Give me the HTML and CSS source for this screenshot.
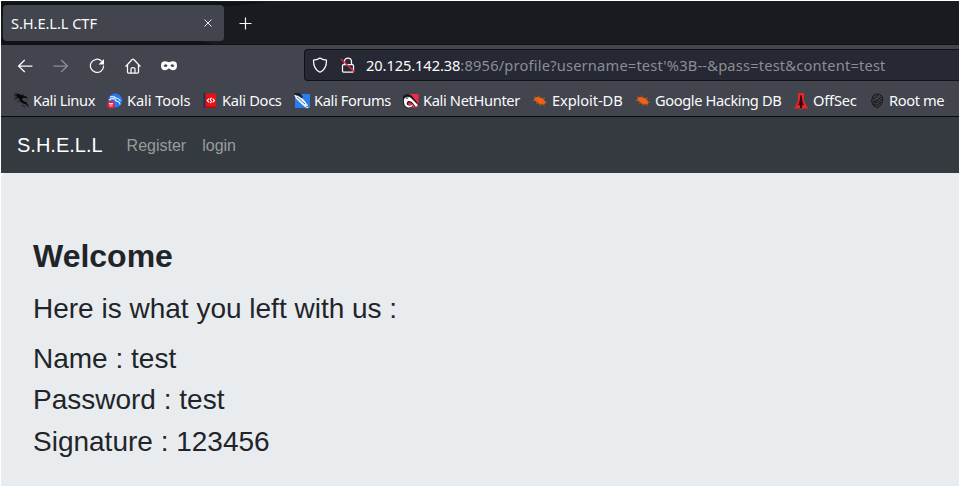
FILE: index.html
```html
<!DOCTYPE html>
<html lang="en">
<head>
<meta charset="utf-8">
<title>S.H.E.L.L CTF</title>
<link rel="stylesheet" href="styles.css">
</head>
<body>
<div class="window">
  <header class="chrome">
    <div class="tabs">
      <svg class="wallpaper" width="958" height="43" viewBox="1 1 958 43"><path d="M1 1h280L230 6H60L1 17zM1 39h60l10 5H1zM64 40h130l20 4H60z" fill="#101315"/><path d="M1 1h290v1H1z" fill="#15211f"/></svg>
      <div class="tab"><span>S.H.E.L.L CTF</span>
        <svg class="close" width="8" height="8" viewBox="0 0 8 8"><path d="M.5.5l7 7M7.5.5l-7 7" stroke="#e8e8ec" fill="none"/></svg>
      </div>
      <svg class="plus" width="13" height="13" viewBox="0 0 13 13"><path d="M6.500.5v12M.5 6.500h12" stroke="#fbfbfe" stroke-width="1.200" fill="none"/></svg>
    </div>
    <div class="toolbar">
      <div class="buttons">
        <svg width="16" height="16" viewBox="0 0 16 16"><path d="M15 8H1.500M7.500 2.300L1.600 8l5.900 5.700" class="stroke"/></svg>
        <svg class="disabled" width="16" height="16" viewBox="0 0 16 16"><path d="M1 8h13.500M8.500 2.300L14.400 8l-5.900 5.700" class="stroke"/></svg>
        <svg width="16" height="16" viewBox="0 0 16 16"><path d="M12.600 3.100A6.600 6.600 0 1 0 14.600 8" class="stroke"/><path d="M15 1v5.500H9.500z" fill="#fbfbfe"/></svg>
        <svg width="16" height="16" viewBox="0 0 16 16"><path d="M.9 8.200L7.200 1.500q.8-.7 1.600 0l6.300 6.700M2.500 6.800V14q0 1 1 1h9q1 0 1-1V6.800M6 15v-4.200Q6 9.500 8 9.500t2 1.300V15" class="stroke"/></svg>
        <svg width="16" height="16" viewBox="0 0 16 16"><path fill-rule="evenodd" d="M0 7.500Q0 3.300 4 3.300C6 3.300 7 4.200 8 4.200s2-.9 4-.9q4 0 4 4.200 0 4.800-4 4.800C10 12.300 9 10.500 8 10.500s-2 1.800-4 1.800q-4 0-4-4.800zM2.600 7.800q1.900 2.600 4-.1-2.100-2.900-4 .1zM9.400 7.700q2.100 2.700 4 .1-1.900-3-4-.1z" fill="#fbfbfe"/></svg>
      </div>
      <div class="address">
        <svg width="16" height="16" viewBox="0 0 16 16"><path d="M8 .9Q10 2.600 14.500 3.200C14.600 9.200 13 13 8 15.200 3 13 1.400 9.200 1.500 3.200Q6 2.600 8 .9z" class="stroke"/></svg>
        <svg class="lock" width="16" height="16" viewBox="0 0 16 16"><path d="M4.500 7V4.500a3.500 3.500 0 0 1 7 0V7M3.500 7.500h9q1 0 1 1V14q0 1-1 1h-9q-1 0-1-1V8.500q0-1 1-1z" class="stroke"/><path d="M1 2l13.500 13" stroke="#f0224d" stroke-width="1.500"/></svg>
        <span class="url"><b>20.125.142.38</b>:8956/profile?username=test'%3B--&amp;pass=test&amp;content=test</span>
      </div>
    </div>
    <nav class="bookmarks">
      <a><svg width="16" height="16" viewBox="0 0 16 16"><path d="M0 .5C3 .3 6 .7 8 2l3-.5-1 1.300q4 0 5 3-3-1.500-5-.8-2 1.500.5 3 4 1 5.300 6.500-2-3.500-6-4.300Q5.500 8.500 6.500 5.500 4.500 4 1 4l4-.7L0 2l5 .1z" fill="#08090a"/><path d="M1 6.500q2-1.500 5-1.500M6 8l-2 1M12 10l2-1M9 12l3 2" stroke="#111315" stroke-width=".8" fill="none"/></svg><span class="linux">Kali Linux</span></a>
      <a><svg width="16" height="16" viewBox="0 0 16 16"><circle cx="8.300" cy="7.500" r="7" fill="#2777f5"/><path d="M3 4q3-1 6 1 3 .2 4.500 3M2 7q3-2 6-1 0 2 3 2.500 2 1 2 3" stroke="#e9f2ff" stroke-width="1.100" fill="none"/><circle cx="4" cy="11.700" r="3.800" fill="#ed1f35"/><path d="M1.900 10.500h4.200M3.200 10.500v3M4.900 10.500v3" stroke="#fff" stroke-width=".8" fill="none"/></svg><span class="tools">Kali Tools</span></a>
      <a><svg width="16" height="16" viewBox="0 0 16 16"><path d="M1.500 0H4v15H1.500z" fill="#202c58"/><path d="M3.500.5H14v14H3.500z" fill="#e81215"/><path d="M2.500 13.500H14V15H2.500z" fill="#a80d12"/><path d="M7 5.700L5.200 7.500 7 9.300M10.700 5.700l1.800 1.800-1.800 1.800M10 5Q7.200 5.500 8.800 7.300T7.800 10" stroke="#fff" stroke-width="1.100" fill="none"/></svg><span class="docs">Kali Docs</span></a>
      <a><svg width="16" height="16" viewBox="0 0 16 16"><path d="M1 1h15v14H1z" fill="#287eed"/><path d="M0 0h6l3 4-3 2-6-4z" fill="#17202b"/><path d="M0 1.500L5 3l5 4 5 7-2 1.500-5-4-6-6z" fill="#f4f7fa"/><path d="M3 4l8 7M0 1l5 2 3 2M12 14l3-1" stroke="#243040" stroke-width=".7" fill="none"/></svg><span class="forums">Kali Forums</span></a>
      <a><svg width="16" height="16" viewBox="0 0 16 16"><path d="M3 1h12.500v13.500H4z" fill="#f32b42"/><path d="M0 3q5-4 9 0l7 9-3 2.500-4-4Q5 8 5 11q1 3 5 1-1 4-6 3-4-1-4-6z" fill="#15191c"/><path d="M1 6q3-4 7-1l7 7-2 2-4-5Q5 7 4 9.500t2 3q2 .5 4-1-1 3.500-5 3Q0 13 1 6z" fill="#fff"/><path d="M2 4.500h4L4 6z" fill="#30363b"/></svg><span class="nethunter">Kali NetHunter</span></a>
      <a><svg width="16" height="16" viewBox="0 0 16 16"><path d="M2 6q2-3 6-1.500 3 .5 5 3.500 1 3-2 3.500-4 0-7-3z" fill="#f06414"/><path d="M2 3.500l3 2M6 2.500l2 3M1 7.500h5M4 11l3-2M8 13l1-3M13 13l-3-3M10 5.500l3-.5M11 8.500l4 1" stroke="#d65a18" stroke-width=".8" fill="none"/></svg><span class="exploit">Exploit-DB</span></a>
      <a><svg width="16" height="16" viewBox="0 0 16 16"><path d="M2 6q2-3 6-1.500 3 .5 5 3.500 1 3-2 3.500-4 0-7-3z" fill="#f06414"/><path d="M2 3.500l3 2M6 2.500l2 3M1 7.500h5M4 11l3-2M8 13l1-3M13 13l-3-3M10 5.500l3-.5M11 8.500l4 1" stroke="#d65a18" stroke-width=".8" fill="none"/></svg><span class="google">Google Hacking DB</span></a>
      <a><svg width="16" height="16" viewBox="0 0 16 16"><path d="M5 0h6v8l4 7.500H1.500L5 8z" fill="#ed252a"/><path d="M7.300 2.500q.7-1 1.400 0l.8 6 1.500 4-2-.5V15H7v-3l-2 .5 1.500-4z" fill="#36080a"/></svg><span class="offsec">OffSec</span></a>
      <a><svg width="16" height="16" viewBox="0 0 16 16"><path d="M4 3q4-4 9 0 2 4-1 9l-4 3-4-3Q1 8 4 3z" fill="#3b3e43" stroke="#15171a"/><path d="M4 6q3-1 5-4M4 9q5-1 8-5M5 10q5 0 8-4M4 12h5l3-3" stroke="#111315" stroke-width=".9" fill="none"/></svg><span>Root me</span></a>
    </nav>
  </header>
  <nav class="navbar"><a class="brand">S.H.E.L.L</a><a>Register</a><a>login</a></nav>
  <main class="panel">
    <h2>Welcome</h2>
    <h3 class="intro">Here is what you left with us :</h3>
    <h3>Name : test</h3>
    <h3>Password : test</h3>
    <h3>Signature : 123456</h3>
  </main>
</div>
</body>
</html>
```
FILE: styles.css
```css
* { box-sizing: border-box; }
body { margin: 0; padding: 1px 0 0 1px; background: #fff; font-family: "Liberation Sans", sans-serif; overflow: hidden; }
.window { height: 485px; display: flex; flex-direction: column; overflow: hidden; background: #fff; }
.chrome { flex: none; height: 116px; background: #42454d; border-bottom: 1px solid #0c0c0d; font-family: "Noto Sans", sans-serif; color: #fbfbfe; font-size: 14.67px; white-space: nowrap; }
.tabs { position: relative; height: 44px; display: flex; align-items: center; background: #1a1b20; border-bottom: 1px solid #111216; padding-left: 2px; }
.wallpaper { position: absolute; left: 0; top: 0; }
.tab { position: relative; width: 221px; height: 36px; padding: 0 12px 0 8px; display: flex; align-items: center; justify-content: space-between; background: #42454d; border-radius: 4px; letter-spacing: -.08px; }
.plus { position: relative; margin: 1px 0 0 15px; }
.toolbar { height: 40px; display: flex; align-items: center; }
.buttons { width: 303px; flex: none; padding: 1px 0 0 16px; display: flex; gap: 20px; }
.disabled { opacity: .4; }
.stroke { fill: none; stroke: #fbfbfe; stroke-width: 1.25; stroke-linecap: round; stroke-linejoin: round; }
.address { flex: 1; height: 32px; display: flex; align-items: center; background: #262833; border: 1px solid #111216; border-right: 0; border-radius: 4px 0 0 4px; padding-left: 7px; }
.lock { margin-left: 12px; }
.url { margin-left: 10px; color: #8c8d96; letter-spacing: .185px; }
.url b { color: #fbfbfe; font-weight: 400; letter-spacing: -.1px; }
.bookmarks { height: 31px; padding: 0 0 2px 12px; display: flex; align-items: center; gap: 12px; }
.bookmarks a { flex: none; display: flex; align-items: center; gap: 4px; }
.bookmarks svg { margin-top: 2px; }
.bookmarks span { letter-spacing: -.4px; }
.bookmarks .linux { width: 62px; }
.bookmarks .tools { width: 63px; letter-spacing: -.1px; }
.bookmarks .docs { width: 60px; letter-spacing: -.3px; }
.bookmarks .forums { width: 77px; letter-spacing: -.36px; }
.bookmarks .nethunter { width: 97px; letter-spacing: -.36px; }
.bookmarks .exploit { width: 71px; letter-spacing: -.1px; }
.bookmarks .google { width: 126px; }
.bookmarks .offsec { width: 44px; letter-spacing: -.2px; }
.navbar { flex: none; height: 56px; display: flex; align-items: center; gap: 16px; padding: 1px 0 0 16px; background: #343a40; font-size: 16px; color: #999c9f; }
.brand { font-size: 20px; color: #fff; margin-right: 8px; }
.panel { flex: 1; background: #e9ecef; border-top-left-radius: 5px; padding: 64px 32px 0; color: #212529; }
h2, h3 { margin: 0 0 8px; line-height: 1.2; }
h2 { font-size: 32px; }
h3 { font-size: 28px; font-weight: 400; }
.intro { margin: 16.6px 0 16px; }
```
